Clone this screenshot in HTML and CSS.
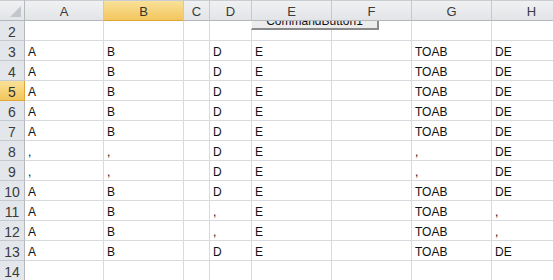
FILE: index.html
```html
<!DOCTYPE html>
<html>
<head>
    <meta charset="utf-8">
    <title>Sheet1</title>
    <link rel="stylesheet" href="styles.css">
</head>
<body>
    <div class="sheet">
        <button class="cmd-button">CommandButton1</button>
        <div class="grid">
            <!-- column headers -->
            <div class="hdr corner"><span class="tri"></span></div>
            <div class="hdr col">A</div>
            <div class="hdr col sel">B</div>
            <div class="hdr col">C</div>
            <div class="hdr col">D</div>
            <div class="hdr col">E</div>
            <div class="hdr col">F</div>
            <div class="hdr col">G</div>
            <div class="hdr col">H</div>

            <div class="hdr row">2</div>
            <div class="cell"></div><div class="cell"></div><div class="cell"></div><div class="cell"></div>
            <div class="cell"></div><div class="cell"></div><div class="cell"></div><div class="cell"></div>

            <div class="hdr row">3</div>
            <div class="cell">A</div><div class="cell">B</div><div class="cell"></div><div class="cell">D</div>
            <div class="cell">E</div><div class="cell"></div><div class="cell">TOAB</div><div class="cell">DE</div>

            <div class="hdr row">4</div>
            <div class="cell">A</div><div class="cell">B</div><div class="cell"></div><div class="cell">D</div>
            <div class="cell">E</div><div class="cell"></div><div class="cell">TOAB</div><div class="cell">DE</div>

            <div class="hdr row sel">5</div>
            <div class="cell">A</div><div class="cell">B</div><div class="cell"></div><div class="cell">D</div>
            <div class="cell">E</div><div class="cell"></div><div class="cell">TOAB</div><div class="cell">DE</div>

            <div class="hdr row">6</div>
            <div class="cell">A</div><div class="cell">B</div><div class="cell"></div><div class="cell">D</div>
            <div class="cell">E</div><div class="cell"></div><div class="cell">TOAB</div><div class="cell">DE</div>

            <div class="hdr row">7</div>
            <div class="cell">A</div><div class="cell">B</div><div class="cell"></div><div class="cell">D</div>
            <div class="cell">E</div><div class="cell"></div><div class="cell">TOAB</div><div class="cell">DE</div>

            <div class="hdr row">8</div>
            <div class="cell">,</div><div class="cell">,</div><div class="cell"></div><div class="cell">D</div>
            <div class="cell">E</div><div class="cell"></div><div class="cell">,</div><div class="cell">DE</div>

            <div class="hdr row">9</div>
            <div class="cell">,</div><div class="cell">,</div><div class="cell"></div><div class="cell">D</div>
            <div class="cell">E</div><div class="cell"></div><div class="cell">,</div><div class="cell">DE</div>

            <div class="hdr row">10</div>
            <div class="cell">A</div><div class="cell">B</div><div class="cell"></div><div class="cell">D</div>
            <div class="cell">E</div><div class="cell"></div><div class="cell">TOAB</div><div class="cell">DE</div>

            <div class="hdr row">11</div>
            <div class="cell">A</div><div class="cell">B</div><div class="cell"></div><div class="cell">,</div>
            <div class="cell">E</div><div class="cell"></div><div class="cell">TOAB</div><div class="cell">,</div>

            <div class="hdr row">12</div>
            <div class="cell">A</div><div class="cell">B</div><div class="cell"></div><div class="cell">,</div>
            <div class="cell">E</div><div class="cell"></div><div class="cell">TOAB</div><div class="cell">,</div>

            <div class="hdr row">13</div>
            <div class="cell">A</div><div class="cell">B</div><div class="cell"></div><div class="cell">D</div>
            <div class="cell">E</div><div class="cell"></div><div class="cell">TOAB</div><div class="cell">DE</div>

            <div class="hdr row">14</div>
            <div class="cell"></div><div class="cell"></div><div class="cell"></div><div class="cell"></div>
            <div class="cell"></div><div class="cell"></div><div class="cell"></div><div class="cell"></div>
        </div>
    </div>
</body>
</html>
```

FILE: styles.css
```css
body {
    margin: 0;
    background: white;
    font-family: 'Liberation Sans', Arial, sans-serif;
    overflow: hidden;
}
.sheet {
    position: relative;
    width: 553px;
    height: 280px;
    overflow: hidden;
}
.grid {
    display: grid;
    grid-template-columns: 25px 79px 80px 26px 42px 80px 80px 80px 80px;
    grid-template-rows: 21px;
    grid-auto-rows: 20px;
}
.hdr {
    position: relative;
    z-index: 2;
    box-sizing: border-box;
    color: #3b3b3b;
    font-size: 13px;
    display: flex;
    align-items: center;
    justify-content: center;
}
.hdr.col, .hdr.corner {
    background: linear-gradient(#f0f1f2, #e2e4e7);
    border-top: 1px solid #c9ccd0;
    border-right: 1px solid #c6c9cd;
    border-bottom: 1px solid #b4b8bd;
    padding-top: 2px;
}
.hdr.corner {
    justify-content: flex-end;
    align-items: flex-end;
    border-right-color: #b4b8bd;
}
.tri {
    width: 0;
    height: 0;
    margin: 0 3px 3px 0;
    border-left: 11px solid transparent;
    border-bottom: 11px solid #c3c7cb;
}
.hdr.row {
    background: #e3e6ea;
    border-right: 1px solid #b4b8bd;
    border-bottom: 1px solid #c6c9cd;
    font-size: 14px;
    padding-top: 2px;
}
.hdr.sel {
    background: linear-gradient(#f9e199, #f2c65e);
    border-bottom-color: #e2a53a;
    color: #333;
}
.hdr.row.sel {
    border-right-color: #e2a53a;
}
.cell {
    box-sizing: border-box;
    border-right: 1px solid #d9dadb;
    border-bottom: 1px solid #d9dadb;
    font-size: 12px;
    line-height: 15px;
    color: #111;
    padding: 0 0 0 3px;
    display: flex;
    align-items: flex-end;
    white-space: nowrap;
}
.cmd-button {
    position: absolute;
    z-index: 1;
    left: 251px;
    top: 12px;
    width: 128px;
    height: 18px;
    box-sizing: border-box;
    background: #ececec;
    border: 1px solid #f8f8f8;
    border-right: 2px solid #8a8a8a;
    border-bottom: 2px solid #8a8a8a;
    font-family: 'Liberation Sans', Arial, sans-serif;
    font-size: 12px;
    color: #111;
    padding: 0;
    line-height: 14px;
}
```
